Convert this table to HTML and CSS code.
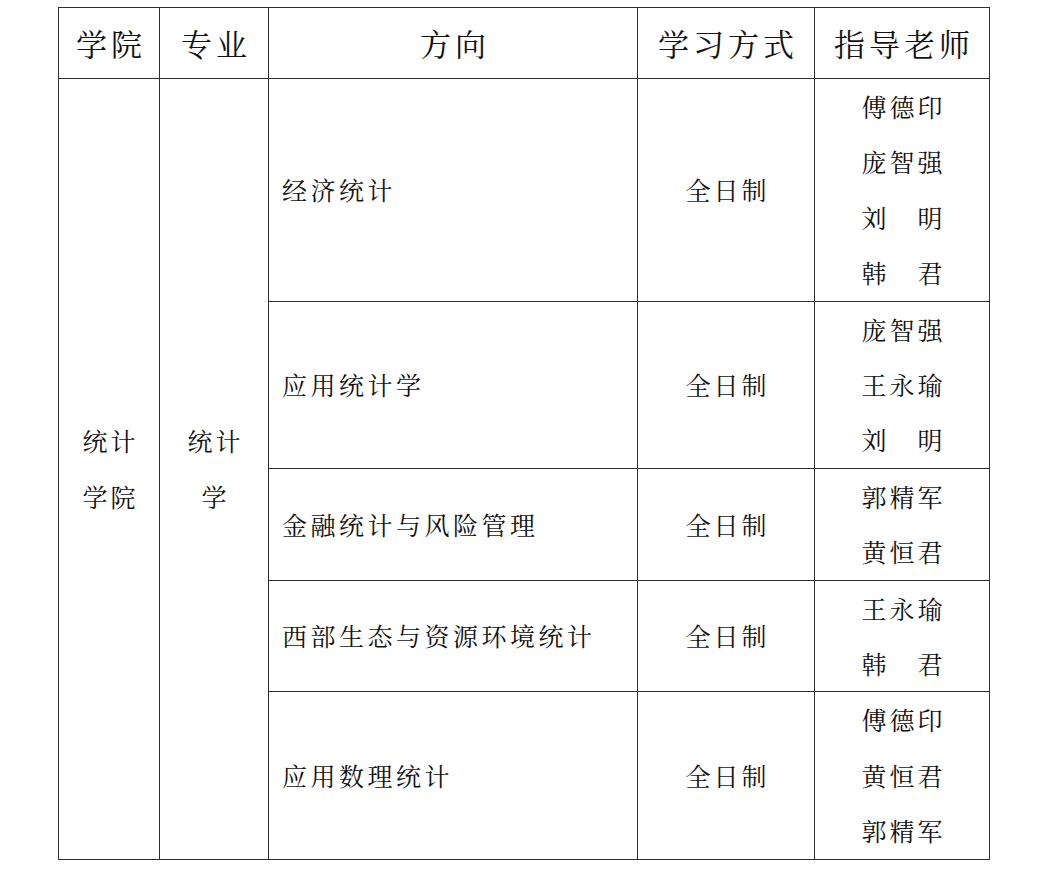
FILE: index.html
```html
<!DOCTYPE html>
<html lang="zh-CN">
<head>
<meta charset="utf-8">
<link rel="stylesheet" href="styles.css">
</head>
<body>
<table class="grid">
  <colgroup>
    <col class="c1"><col class="c2"><col class="c3"><col class="c4"><col class="c5">
  </colgroup>
  <tr class="head">
    <th>学院</th><th>专业</th><th>方向</th><th>学习方式</th><th>指导老师</th>
  </tr>
  <tr class="r1">
    <td class="ctr" rowspan="5">统计<br>学院</td>
    <td class="ctr" rowspan="5">统计<br>学</td>
    <td class="dir">经济统计</td>
    <td class="ctr">全日制</td>
    <td class="ctr">傅德印<br>庞智强<br>刘　明<br>韩　君</td>
  </tr>
  <tr class="r2">
    <td class="dir">应用统计学</td>
    <td class="ctr">全日制</td>
    <td class="ctr">庞智强<br>王永瑜<br>刘　明</td>
  </tr>
  <tr class="r3">
    <td class="dir">金融统计与风险管理</td>
    <td class="ctr">全日制</td>
    <td class="ctr">郭精军<br>黄恒君</td>
  </tr>
  <tr class="r4">
    <td class="dir">西部生态与资源环境统计</td>
    <td class="ctr">全日制</td>
    <td class="ctr">王永瑜<br>韩　君</td>
  </tr>
  <tr class="r5">
    <td class="dir">应用数理统计</td>
    <td class="ctr">全日制</td>
    <td class="ctr">傅德印<br>黄恒君<br>郭精军</td>
  </tr>
</table>
</body>
</html>
```
FILE: styles.css
```css
html, body {
  margin: 0;
  padding: 0;
  background: #ffffff;
}
body {
  padding: 7px 0 0 58px;
  font-family: "Noto Serif CJK SC", "Noto Sans CJK SC", sans-serif;
  color: #111111;
}
.grid {
  border-collapse: collapse;
  table-layout: fixed;
  width: 931px;
}
.c1 { width: 101px; }
.c2 { width: 109px; }
.c3 { width: 369px; }
.c4 { width: 177px; }
.c5 { width: 175px; }
.grid th, .grid td {
  border: 1px solid #2e2e2e;
  padding: 0;
  vertical-align: middle;
}
.grid th {
  height: 70px;
  font-size: 31px;
  font-weight: 400;
  letter-spacing: 4px;
  padding-left: 4px;
  line-height: 40px;
  text-align: center;
}
.grid td {
  font-size: 25px;
  letter-spacing: 3px;
  line-height: 55.4px;
}
.grid td.ctr {
  text-align: center;
  padding-left: 3px;
}
.grid td.dir {
  text-align: left;
  padding-left: 13px;
  letter-spacing: 3.5px;
}
```
